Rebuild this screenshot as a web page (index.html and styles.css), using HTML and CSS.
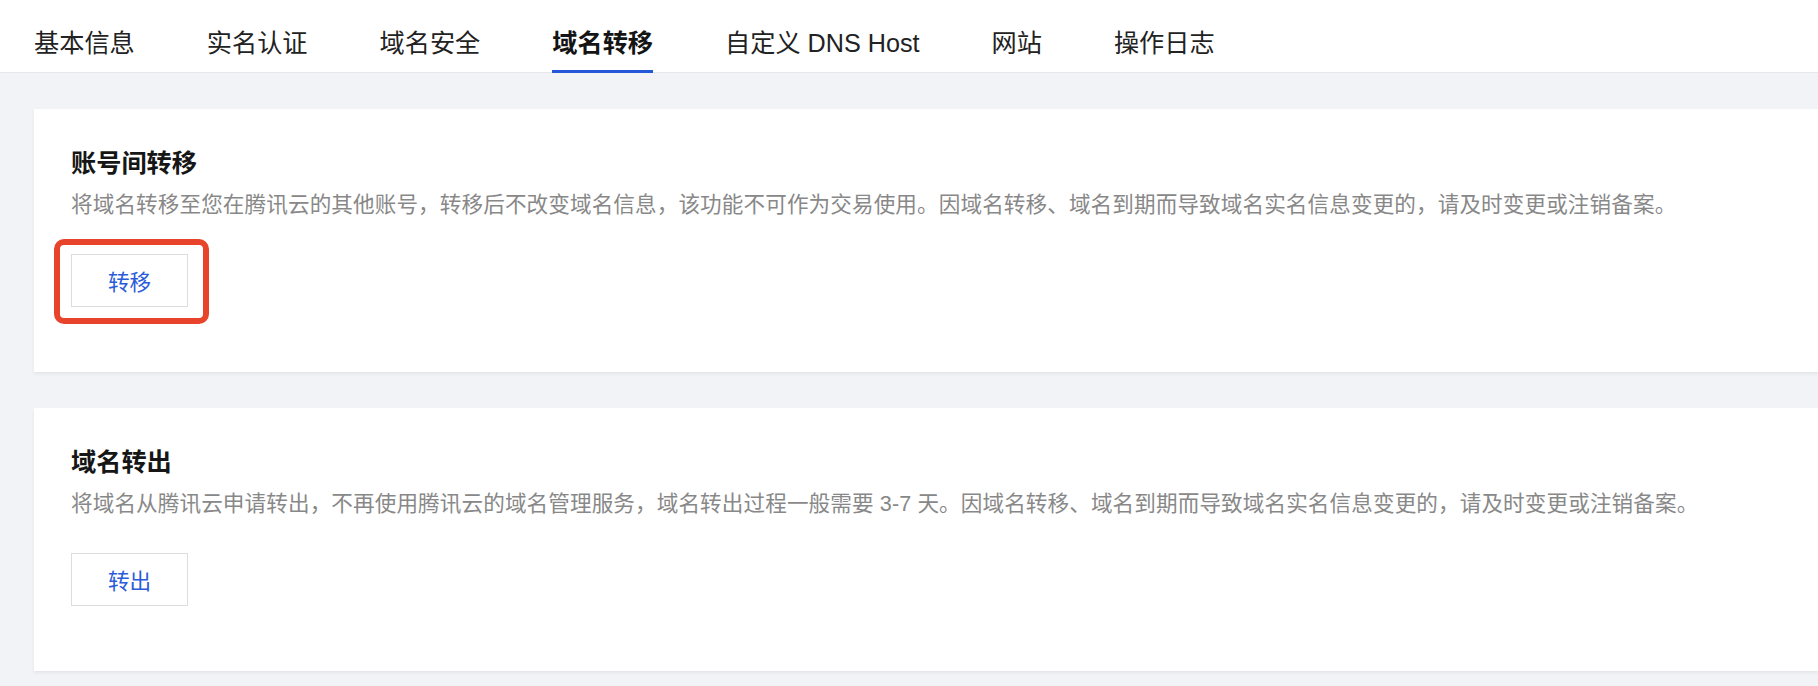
FILE: index.html
```html
<!DOCTYPE html>
<html lang="zh-CN">
<head>
<meta charset="utf-8">
<title>域名转移</title>
<link rel="stylesheet" href="styles.css">
</head>
<body>
<nav class="tabs">
  <a class="tab">基本信息</a>
  <a class="tab">实名认证</a>
  <a class="tab">域名安全</a>
  <a class="tab active">域名转移</a>
  <a class="tab">自定义 DNS Host</a>
  <a class="tab">网站</a>
  <a class="tab">操作日志</a>
</nav>
<main class="content">
  <section class="card">
    <h2 class="card-title">账号间转移</h2>
    <p class="card-desc">将域名转移至您在腾讯云的其他账号，转移后不改变域名信息，该功能不可作为交易使用。因域名转移、域名到期而导致域名实名信息变更的，请及时变更或注销备案。</p>
    <div class="btn-wrap">
      <button class="btn">转移</button>
      <span class="highlight"></span>
    </div>
  </section>
  <section class="card">
    <h2 class="card-title">域名转出</h2>
    <p class="card-desc">将域名从腾讯云申请转出，不再使用腾讯云的域名管理服务，域名转出过程一般需要 3-7 天。因域名转移、域名到期而导致域名实名信息变更的，请及时变更或注销备案。</p>
    <div class="btn-wrap">
      <button class="btn">转出</button>
    </div>
  </section>
</main>
</body>
</html>
```

FILE: styles.css
```css
* {
  box-sizing: border-box;
}

html, body {
  margin: 0;
  padding: 0;
}

body {
  background: #f2f3f6;
  font-family: "Liberation Sans", "Noto Sans CJK SC", sans-serif;
  overflow: hidden;
  width: 1818px;
  height: 686px;
}

.tabs {
  display: flex;
  gap: 72px;
  height: 73px;
  padding-left: 34px;
  background: #ffffff;
  border-bottom: 1px solid #e6e7eb;
}

.tab {
  display: block;
  height: 73px;
  margin-bottom: -1px;
  padding-top: 25px;
  font-size: 25.2px;
  line-height: 36px;
  color: #222222;
  border-bottom: 3px solid transparent;
  white-space: nowrap;
  cursor: pointer;
}

.tab.active {
  font-weight: 700;
  color: #141414;
  border-bottom-color: #2456d8;
}

.content {
  padding: 36px 0 0 34px;
  display: flex;
  flex-direction: column;
  gap: 36px;
}

.card {
  background: #ffffff;
  padding: 36px 37px 65px;
  box-shadow: 0 2px 3px rgba(40, 50, 80, 0.07);
}

.card-title {
  margin: 0 0 6px;
  font-size: 25.2px;
  line-height: 36px;
  font-weight: 700;
  color: #161616;
}

.card-desc {
  margin: 0;
  font-size: 21.6px;
  line-height: 36px;
  color: #888888;
  letter-spacing: 0.1px;
  white-space: nowrap;
}

.btn-wrap {
  position: relative;
  display: inline-block;
  margin-top: 31px;
}

.btn {
  display: block;
  width: 117px;
  height: 53px;
  padding: 0;
  background: #ffffff;
  border: 1px solid #dcdde1;
  border-radius: 0;
  font-family: inherit;
  font-size: 21.6px;
  color: #2a5bd8;
  cursor: pointer;
}

.highlight {
  position: absolute;
  left: -17px;
  top: -15px;
  width: 155px;
  height: 85px;
  border: 6px solid #e8432b;
  border-radius: 10px;
  pointer-events: none;
}
```
